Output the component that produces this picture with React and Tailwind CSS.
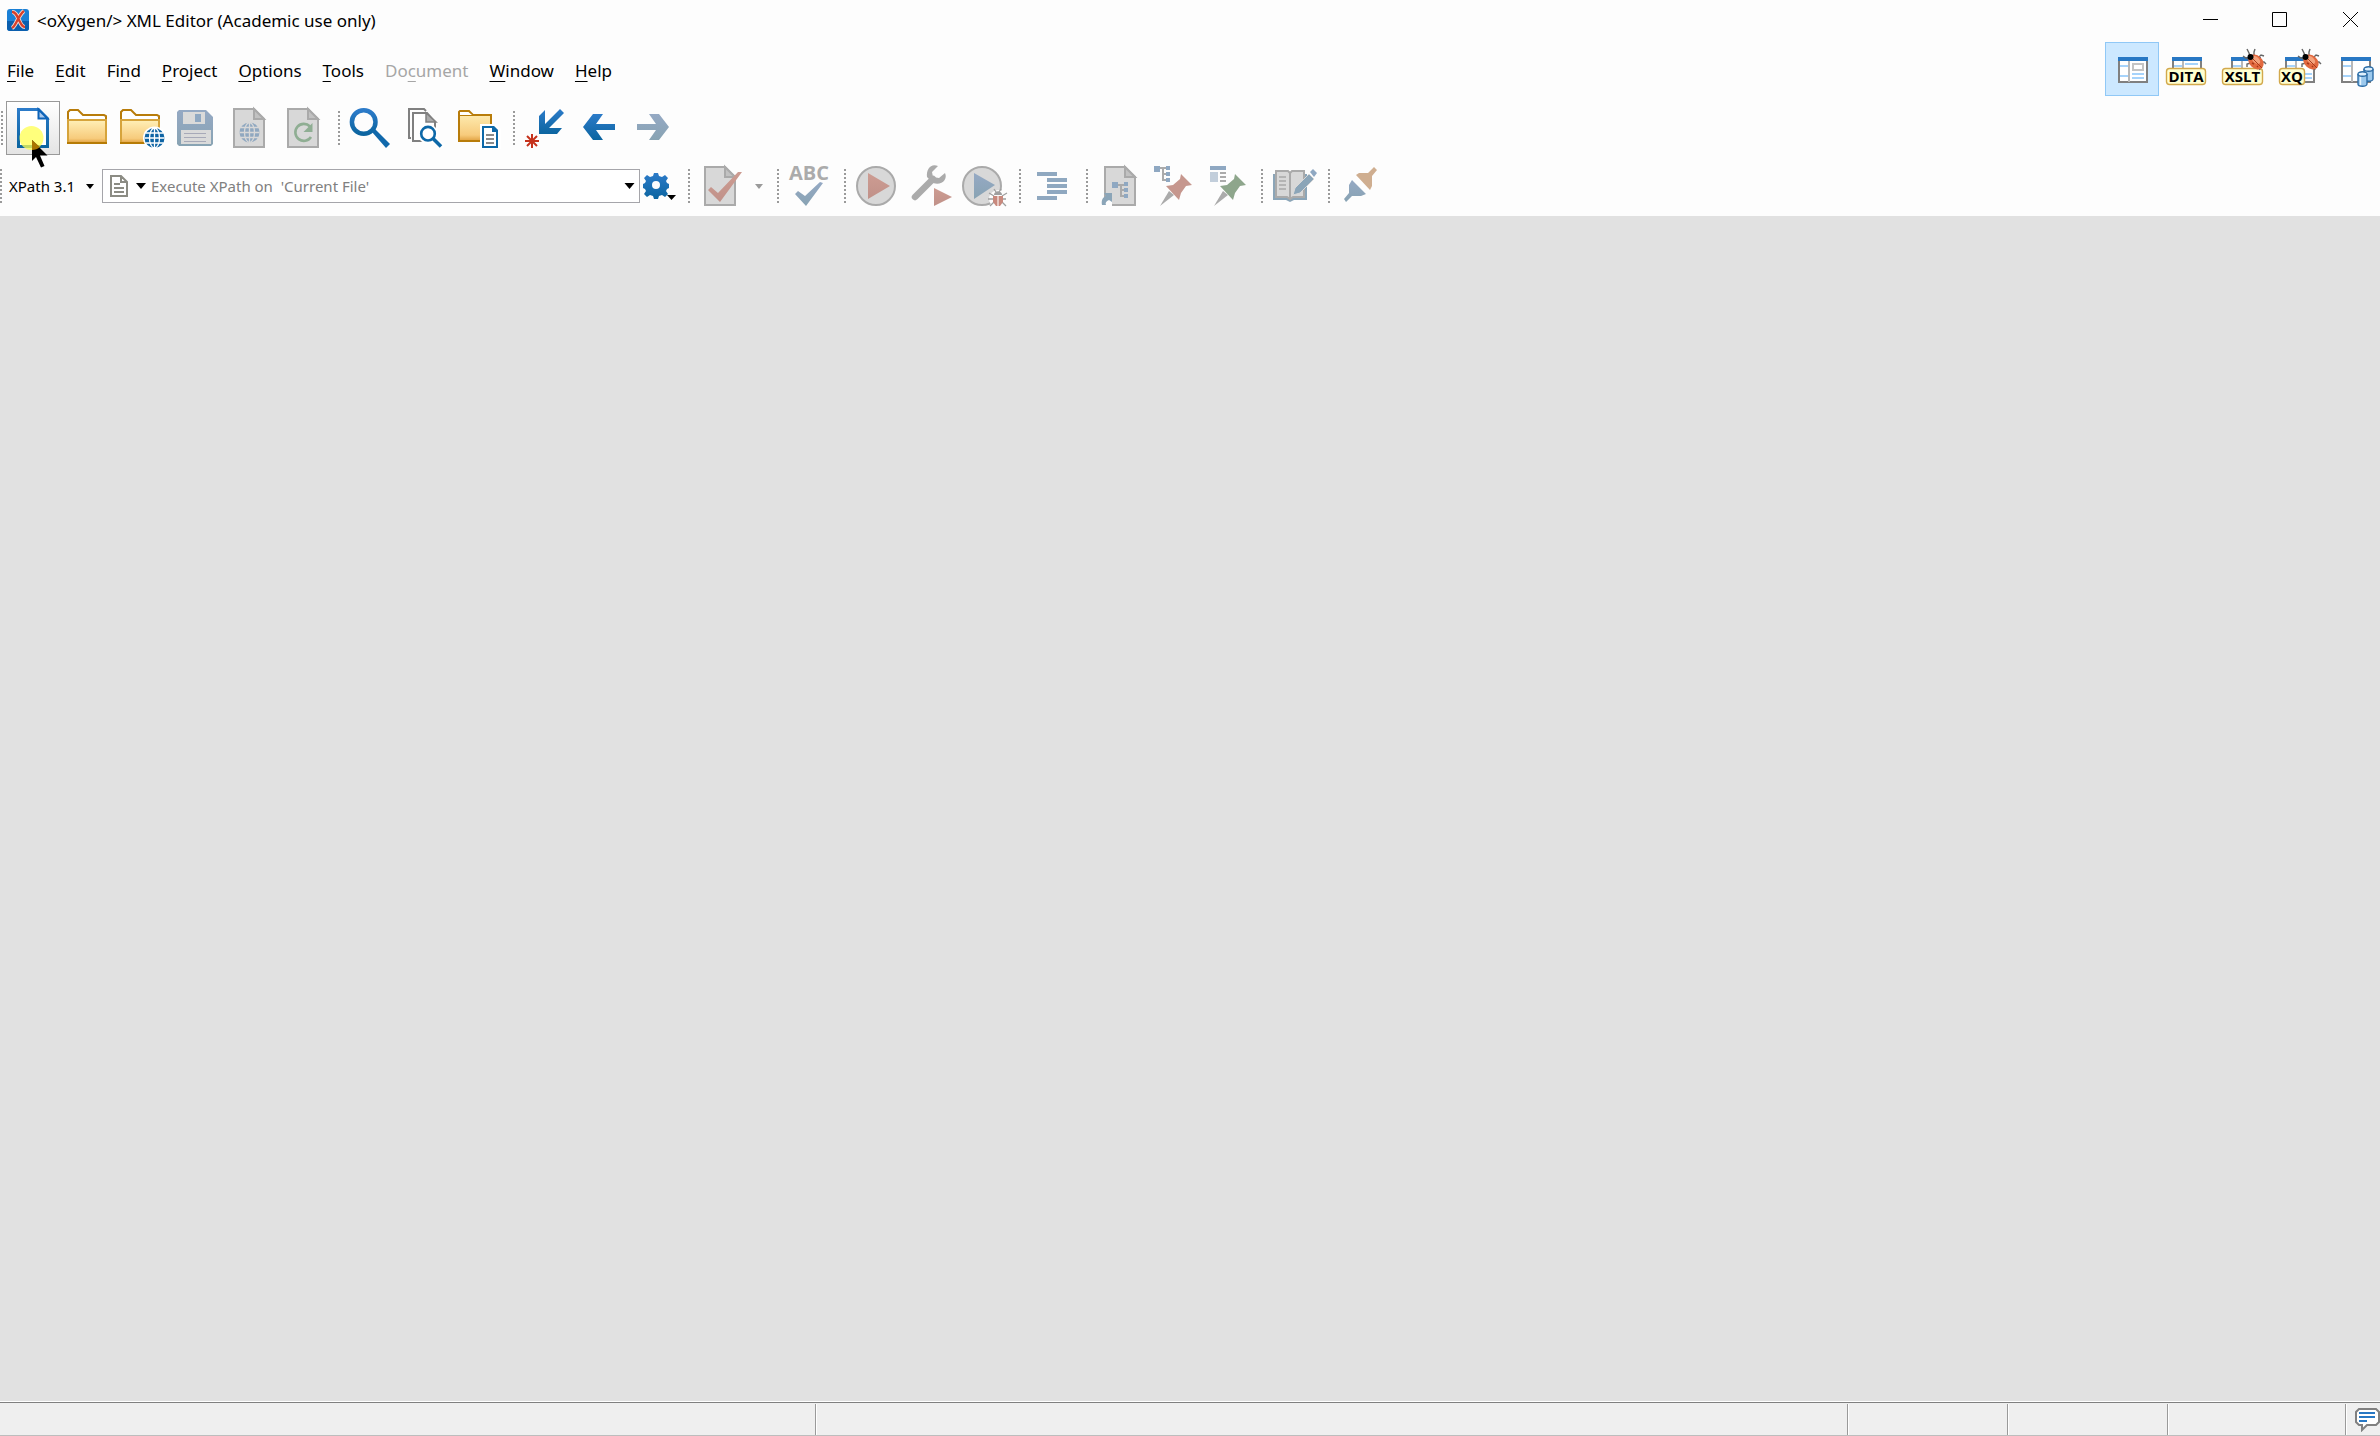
import clsx from "clsx";

const menus = [
  ["", "F", "ile"],
  ["", "E", "dit"],
  ["Fi", "n", "d"],
  ["", "P", "roject"],
  ["", "O", "ptions"],
  ["", "T", "ools"],
  ["Do", "c", "ument"],
  ["", "W", "indow"],
  ["", "H", "elp"],
];

function Icon({ children }) {
  return (
    <svg viewBox="0 0 48 48" className="size-12 shrink-0 overflow-visible" fill="none" aria-hidden="true">
      {children}
    </svg>
  );
}

function ToolButton({ label, active, disabled, children }) {
  return (
    <button
      aria-label={label}
      disabled={disabled}
      className={clsx(
        "flex size-[54px] shrink-0 items-center justify-center border",
        active ? "border-[#999999] bg-linear-to-b from-white to-[#e4e4e4]" : "border-transparent"
      )}
    >
      <Icon>{children}</Icon>
    </button>
  );
}

function Separator() {
  return (
    <div className="flex w-[13px] shrink-0 justify-end pr-[3px]">
      <Dots />
    </div>
  );
}

function Dots() {
  return <div className="h-[34px] w-0.5 bg-[repeating-linear-gradient(to_bottom,#9a9a9a_0_2px,transparent_2px_4px)]" />;
}

function Caret({ className }) {
  return (
    <svg viewBox="0 0 10 6" className={className} fill="currentColor" aria-hidden="true">
      <path d="M0 0h10L5 6z" />
    </svg>
  );
}

/* Shared gradients */
function Defs() {
  return (
    <svg className="absolute size-0" aria-hidden="true">
      <defs>
        <linearGradient id="blue" x1="0" y1="0" x2="0" y2="1">
          <stop offset="0" stopColor="#2c7bc9" />
          <stop offset="1" stopColor="#0c65a0" />
        </linearGradient>
        <linearGradient id="pale" x1="0" y1="0" x2="0" y2="1">
          <stop offset="0" stopColor="#95a9c4" />
          <stop offset="1" stopColor="#88a3b3" />
        </linearGradient>
        <linearGradient id="rose" x1="0" y1="0" x2="0" y2="1">
          <stop offset="0" stopColor="#cd9c92" />
          <stop offset="1" stopColor="#c09189" />
        </linearGradient>
        <linearGradient id="folder" x1="0" y1="0" x2="0" y2="1">
          <stop offset="0" stopColor="#fff0b8" />
          <stop offset="0.8" stopColor="#f7cb7c" />
          <stop offset="1" stopColor="#e0a040" />
        </linearGradient>
      </defs>
    </svg>
  );
}

function Page({ x = 8, stroke = "#aaaaaa", fill = "#d8d8d8", fold = "#c2c2c2" }) {
  return (
    <g transform={`translate(${x} 4)`} stroke={stroke} strokeWidth="2">
      <path d="M1 1h20l10 10v28H1z" fill={fill} />
      <path d="M21 1v10h10z" fill={fold} />
    </g>
  );
}

function Folder({ x = 4 }) {
  return (
    <g transform={`translate(${x} 0)`}>
      <path d="M1 16V8l2-2h8l5 5h21l2 1v4" stroke="#b87c0a" strokeWidth="2" fill="#fff" />
      <path d="M1 16h38v23H1z" fill="url(#folder)" stroke="#d6a43c" strokeWidth="2" />
      <path d="M0 39h40" stroke="#b67b05" strokeWidth="2" />
    </g>
  );
}

function Globe({ cx, cy, fill, line }) {
  return (
    <g transform={`translate(${cx} ${cy})`}>
      <circle r="10" fill={fill} />
      <path d="M-10 0h20M0-10v20M-9-5H9M-9 5H9" stroke={line} strokeWidth="1.3" />
      <ellipse rx="5" ry="10" stroke={line} strokeWidth="1.3" />
    </g>
  );
}

function Pin({ fill }) {
  return (
    <>
      <path d="M12 44l9-15 5 4z" fill="#ababab" />
      <path d="M33 12l11 11-6 1-5 7-2 7-13-14 7-1 7-6z" fill={fill} />
    </>
  );
}

/* Perspective window frame */
function Frame({ x = 10, plain }) {
  return (
    <g transform={`translate(${x} 8)`}>
      <path d="M1 3h28v22H1z" fill="#fff" stroke="#808080" strokeWidth="2" />
      <path d="M11 4v21" stroke="#b8b8b8" strokeWidth="2" />
      <path d="M2 9h8M2 19h8" stroke="#a6d3fb" strokeWidth="2" />
      {!plain && <path d="M14 17h13M14 21h13" stroke="#a6d3fb" strokeWidth="2" />}
      <path d="M0 0h30v4H0z" fill="#2878c4" />
    </g>
  );
}

function Tag({ x, width, children }) {
  return (
    <>
      <rect x={x} y="19.5" width={width} height="16" rx="3" fill="#ffffd0" stroke="#d2a94c" strokeWidth="1.4" />
      <text x={x + width / 2} y="33" textAnchor="middle" fill="#000" className="font-['Open_Sans',sans-serif] text-[15px] font-bold">
        {children}
      </text>
    </>
  );
}

function Beetle({ x }) {
  return (
    <g transform={`translate(${x} 11)`}>
      <path
        d="M-4-1l-4-1-3-2M-4-4l-1-3-2-4M0-4V-8l1-3M-3 3l-4 1v3M4-2l3-3 3 1M7 2h3l2 2M5 7l1 3"
        stroke="#666"
        strokeWidth="1.4"
      />
      <ellipse rx="8.5" ry="6.5" transform="translate(2 2) rotate(42)" fill="#e2693f" />
      <ellipse rx="5" ry="3" transform="translate(2 0) rotate(42)" fill="#f4a27c" />
      <path d="M-3-3L8 8" stroke="#a8391a" />
      <path d="M-2 3l2 1M3 6l1 1" stroke="#a8391a" strokeWidth="1.5" />
      <circle cx="-3.500" cy="-3" r="3" fill="#000" />
    </g>
  );
}

function Cylinder({ x, y }) {
  return (
    <g transform={`translate(${x} ${y})`} stroke="#2b6ca6" strokeWidth="1.4">
      <path d="M1 3v10c0 3 9 3 9 0V3" fill="#9cc9ed" />
      <path d="M3.500 5v9" stroke="#e6f4fd" />
      <ellipse cx="5.500" cy="3" rx="4.500" ry="2.200" fill="#dff0fc" />
    </g>
  );
}

function Perspective({ label, active, last, children }) {
  return (
    <button
      aria-label={label}
      aria-pressed={!!active}
      className={clsx(
        "flex h-[54px] items-center justify-center border",
        active ? "w-[54px] border-[#90c8f6] bg-[#cce8ff]" : "border-transparent",
        !active && (last ? "w-[53px]" : "w-14")
      )}
    >
      <svg viewBox="0 0 48 40" className="h-10 w-12 shrink-0 overflow-visible" fill="none" aria-hidden="true">
        {children}
      </svg>
    </button>
  );
}

function TitleBar() {
  return (
    <header className="flex h-10 items-center justify-between">
      <div className="flex items-center gap-2 pl-[7px]">
        <svg viewBox="0 0 22 22" className="size-[22px]" aria-hidden="true">
          <rect width="22" height="22" rx="3" fill="#1a80d6" />
          <path d="M0 12h22v7a3 3 0 0 1-3 3H3a3 3 0 0 1-3-3z" fill="#0b5fae" />
          <path d="M5 3c4 0 5 4 7 8s3 7 6 7M17 2c-3 2-5 6-7 10s-3 6-5 7" fill="none" stroke="#f6ded8" strokeWidth="4" />
          <path d="M5 3c4 0 5 4 7 8s3 7 6 7M17 2c-3 2-5 6-7 10s-3 6-5 7" fill="none" stroke="#d8402a" strokeWidth="2.4" />
        </svg>
        <h1 className="pt-0.5 font-['Noto_Sans','Open_Sans',sans-serif] text-[17px] leading-6">
          &lt;oXygen/&gt; XML Editor (Academic use only)
        </h1>
      </div>
      <div className="flex">
        {[
          ["Minimize", "M4 11.5h15"],
          ["Maximize", "M4.500 4.500h14v14h-14z"],
          ["Close", "M6 4l15 15M21 4L6 19"],
        ].map(([label, d]) => (
          <button key={label} aria-label={label} className="flex h-10 w-[69px] items-center justify-center pl-1.5">
            <svg viewBox="0 0 24 24" className="size-6" fill="none" stroke="#000" aria-hidden="true">
              <path d={d} />
            </svg>
          </button>
        ))}
      </div>
    </header>
  );
}

function MenuBar() {
  return (
    <div className="flex h-[59px] items-center justify-between">
      <nav className="flex gap-[21px] pt-0.5 pl-[7px] font-['Noto_Sans','Open_Sans',sans-serif] text-[17px] leading-6">
        {menus.map(([before, key, after]) => (
          <button key={before + key + after} disabled={key === "c"} className="disabled:text-[#a6a6a6]">
            {before}
            <span className="underline decoration-1 underline-offset-4">{key}</span>
            {after}
          </button>
        ))}
      </nav>
      <div className="flex pb-px">
        <Perspective label="Editor" active>
          <Frame plain />
          <path d="M25 15h10v6H25z" fill="#fff" stroke="#c4c4c4" strokeWidth="2" />
          <path d="M24 25h12M24 29h12" stroke="#a6d3fb" strokeWidth="2" />
        </Perspective>
        <Perspective label="DITA">
          <Frame x={9} plain />
          <path d="M22 15h13" stroke="#a6d3fb" strokeWidth="2" />
          <Tag x={3.5} width={39}>DITA</Tag>
        </Perspective>
        <Perspective label="XSLT Debugger">
          <Frame x={12} plain />
          <Tag x={3.5} width={40}>XSLT</Tag>
          <Beetle x={35} />
        </Perspective>
        <Perspective label="XQuery Debugger">
          <Frame x={10} />
          <Tag x={4.5} width={25}>XQ</Tag>
          <Beetle x={34} />
        </Perspective>
        <Perspective label="Database" last>
          <Frame x={11} plain />
          <Cylinder x={33} y={17} />
          <Cylinder x={27} y={22} />
        </Perspective>
      </div>
    </div>
  );
}

function MainToolbar() {
  return (
    <div className="flex h-[58px] items-center">
      <div className="w-1.5 shrink-0 pl-px">
        <Dots />
      </div>
      <div className="relative">
        <ToolButton label="New" active>
          <path d="M9.500 5.500h20l9 9v28h-29z" fill="#fff" stroke="url(#blue)" strokeWidth="3" />
          <path d="M29.500 5.500v9h9z" fill="#a9c9ee" stroke="#0d63b8" strokeWidth="2" />
          <circle cx="22.500" cy="34" r="12" fill="#ffff50" fillOpacity="0.75" />
        </ToolButton>
        {/* Mouse pointer */}
        <svg viewBox="0 0 16 28" className="pointer-events-none absolute top-[39px] left-[26px] z-10 h-7 w-4" aria-hidden="true">
          <path d="M0 0v21l4-4 5 10.500 3.500-1.500-4.500-10.500h7.500z" fill="#000" />
          <path d="M0 0v10c3 0 6-1 8-3z" fill="#a87500" />
        </svg>
      </div>
      <ToolButton label="Open">
        <Folder />
      </ToolButton>
      <ToolButton label="Open URL">
        <Folder x={3} />
        <circle cx="37.500" cy="34" r="11.500" fill="#fff" />
        <Globe cx={37.5} cy={34} fill="#0e64a4" line="#fff" />
      </ToolButton>
      <ToolButton label="Save" disabled>
        <path d="M8 6h27l7 7v27l-2 2H8l-2-2V8z" fill="url(#pale)" />
        <path d="M12 8h22v12H12zM10 26h30v14H10z" fill="#dadada" />
        <path d="M24 10h6v8h-6z" fill="#8fa8c2" />
        <path d="M13 29.500h22M13 33.500h22M13 37.500h22" stroke="#a7a9b8" />
      </ToolButton>
      <ToolButton label="Save to URL" disabled>
        <Page />
        <Globe cx={24.5} cy={28.5} fill="#90a8c0" line="#d8d8d8" />
      </ToolButton>
      <ToolButton label="Reload" disabled>
        <Page />
        <path d="M32 33a8.500 8.500 0 1 1-1-10.500" stroke="#8fae93" strokeWidth="2.600" />
        <path d="M33.500 19v9h-9z" fill="#8fae93" />
      </ToolButton>
      <Separator />
      <ToolButton label="Find">
        <circle cx="17.700" cy="18" r="11.800" stroke="url(#blue)" strokeWidth="4.500" />
        <path d="M26 28l3-3 15 15-4 4z" fill="#1068ab" />
      </ToolButton>
      <ToolButton label="Find in Files">
        <path d="M11 34H9V5h15l2 2" stroke="#808080" strokeWidth="2" />
        <path d="M13 9h14l8 9v19H13z" fill="#fff" stroke="#808080" strokeWidth="2" />
        <path d="M26 9v9h10z" fill="#ababab" stroke="#808080" strokeWidth="1.500" />
        <circle cx="28" cy="30" r="10" fill="#fff" />
        <path d="M34 38l8 7 3-4-8-7z" fill="#fff" />
        <circle cx="28" cy="29.700" r="6.800" fill="#fff" stroke="#0d68a8" strokeWidth="2.600" />
        <path d="M33 34.500l8 8" stroke="#0d68a8" strokeWidth="3.600" />
      </ToolButton>
      <ToolButton label="Find Resource">
        <path d="M5 37V8l1-1h9l4 4h18v26z" fill="url(#folder)" stroke="#b87c0a" strokeWidth="2" />
        <path d="M6 8h8l4 3H6z" fill="#fff" />
        <path d="M5 11.500h31" stroke="#b87c0a" />
        <path d="M26 20h16l5 5v20H26z" fill="#fff" />
        <path d="M29 23h10l4 4v16H29z" fill="#fff" stroke="#0d68a8" strokeWidth="2" />
        <path d="M38 22h2l4 4v2h-6z" fill="#0d68a8" />
        <path d="M32 31h8M32 35h8M32 39h8" stroke="#8a8a8a" strokeWidth="2" />
      </ToolButton>
      <Separator />
      <ToolButton label="Last Modification">
        <path d="M18 12l6-6v14L39 5l4 4-15 15h13l-5 6H18z" fill="url(#blue)" />
        <path d="M11 30v14M4 37h14M6 32l10 10M16 32L6 42" stroke="#c5321c" strokeWidth="2" />
      </ToolButton>
      <ToolButton label="Back">
        <path d="M8 23l10-13h10l-7 10h19v6H21l7 10H18z" fill="url(#blue)" />
      </ToolButton>
      <ToolButton label="Forward" disabled>
        <path d="M40 23L30 10H20l7 10H8v6h19l-7 10h10z" fill="url(#pale)" />
      </ToolButton>
    </div>
  );
}

function XPathToolbar() {
  return (
    <div className="flex h-[59px] items-center pb-px">
      <div className="w-[9px] shrink-0">
        <Dots />
      </div>
      <button className="flex w-[93px] shrink-0 items-center justify-between pr-2 font-['Noto_Sans','Open_Sans',sans-serif] text-[15px] leading-6">
        <span className="whitespace-nowrap">XPath 3.1</span>
        <Caret className="h-[5px] w-2" />
      </button>
      <div className="flex h-[34px] w-[538px] shrink-0 items-center border border-[#a5a5aa] bg-white">
        <button aria-label="XPath scope" className="flex shrink-0 items-center gap-2 pr-[5px] pl-[7px]">
          <svg viewBox="0 0 18 22" className="h-[22px] w-[18px]" fill="none" stroke="#8c8c84" strokeWidth="2" aria-hidden="true">
            <path d="M1 1h10l6 6v14H1zM11 1v6h6M4 9h6M4 13h10M4 17h10" />
          </svg>
          <Caret className="h-[6px] w-2.5" />
        </button>
        <input
          aria-label="XPath expression"
          placeholder="Execute XPath on  'Current File'"
          className="min-w-0 flex-1 font-['Noto_Sans','Open_Sans',sans-serif] text-[15px] leading-6 outline-none placeholder:text-[#808080]"
        />
        <button aria-label="XPath history" className="flex h-full w-5 shrink-0 items-center justify-center">
          <Caret className="h-[6px] w-[11px]" />
        </button>
      </div>
      <button aria-label="XPath settings" className="flex h-[54px] w-10 shrink-0 items-center justify-center">
        <svg viewBox="0 0 40 48" className="h-12 w-10" aria-hidden="true">
          <g transform="translate(16 23)" fill="url(#blue)">
            <path
              fillRule="evenodd"
              d="M-2-12h4l1 3 3 1 3-2 3 3-2 3 1 2 2 1v4l-2 1-1 2 2 3-3 3-3-2-3 1-1 3h-4l-1-3-3-1-3 2-3-3 2-3-1-2-2-1v-4l2-1 1-2-2-3 3-3 3 2 3-1zM4 0a4 4 0 1 0-8 0a4 4 0 1 0 8 0z"
            />
          </g>
          <path d="M27 33h9l-4.500 5z" />
        </svg>
      </button>
      <Separator />
      <ToolButton label="Validate" disabled>
        <Page />
        <path d="M12 28l3-3 7 6L42 10h4L24 40z" fill="url(#rose)" />
      </ToolButton>
      <button
        aria-label="Validation options"
        disabled
        className="flex h-[54px] w-[22px] shrink-0 items-center justify-center pl-0.5 text-[#9a9a9a]"
      >
        <Caret className="h-[5px] w-2" />
      </button>
      <Separator />
      <ToolButton label="Check Spelling" disabled>
        <text x="24" y="18" textAnchor="middle" fill="#ababab" className="font-['Open_Sans',sans-serif] text-[20px] font-bold">
          ABC
        </text>
        <path d="M10 32l3-3 7 5L35 20l3 1-17 23z" fill="url(#pale)" />
      </ToolButton>
      <Separator />
      <ToolButton label="Apply Transformation" disabled>
        <circle cx="24" cy="24" r="19" fill="#d8d8d8" stroke="#aaaaaa" strokeWidth="2" />
        <path d="M16 11l22 13-22 13z" fill="url(#rose)" />
      </ToolButton>
      <ToolButton label="Configure Transformation" disabled>
        <path d="M9 35l18-18" stroke="#ababab" strokeWidth="6.500" strokeLinecap="round" />
        <path d="M32 4l-6 6 1 5 6 1 6-5c3 6-3 13-12 10l-6-6c-1-8 4-14 11-11z" fill="#ababab" />
        <path d="M28 26l18 9-18 9z" fill="url(#rose)" />
      </ToolButton>
      <ToolButton label="Debug Scenario" disabled>
        <circle cx="22" cy="24" r="19" fill="#d8d8d8" stroke="#aaaaaa" strokeWidth="2" />
        <path d="M14 11l21 12-21 14z" fill="url(#pale)" />
        <circle cx="38" cy="37" r="9" fill="#fdfdfd" />
        <path d="M29 31l5 3M47 31l-5 3M28 37h18M30 44l4-4M46 44l-4-4M34 27l2 3M41 27l-2 3" stroke="#9f9f9f" strokeWidth="1.300" />
        <path d="M33 34h10v6l-3 4h-4l-3-4z" fill="#c8897d" />
        <path d="M34 33c0-5 8-5 8 0z" fill="#9f9f9f" />
        <path d="M38 34v10" stroke="#f0ddd8" strokeWidth="1.500" />
      </ToolButton>
      <Separator />
      <ToolButton label="Format and Indent" disabled>
        <path d="M10 10h20v4H10zM20 16h20v4H20zM20 22h20v4H20zM20 28h20v4H20zM10 34h20v4H10z" fill="#8fa8c0" />
      </ToolButton>
      <Separator />
      <ToolButton label="Associate Schema" disabled>
        <Page x={10} />
        <path d="M24 23h6M27 23v11h4M27 28h4" stroke="#aaaaaa" strokeWidth="2" />
        <path d="M18 20h6v6h-6zM30 20h4v4h-4zM30 26h4v4h-4zM30 32h4v4h-4z" fill="#8fa8c2" />
        <path d="M8 36h10v9H8z" fill="#fdfdfd" />
        <path d="M8 43c-1-5 1-8 4-9l-2-3h8v9l-3-2c-3 1-4 3-3 5z" fill="#8ba5b8" />
      </ToolButton>
      <ToolButton label="Pin Schema" disabled>
        <path d="M12 6h6M15 6v12h4M15 12h4" stroke="#ababab" strokeWidth="2" />
        <path d="M6 4h6v6H6zM18 4h4v4h-4zM18 10h4v4h-4zM18 16h4v4h-4z" fill="#8fa8c2" />
        <Pin fill="#c6978e" />
      </ToolButton>
      <ToolButton label="Pin Stylesheet" disabled>
        <path d="M8 4h16v4H8z" fill="#8fa8c2" />
        <path d="M8 10h8v10H8z" fill="#c2cedb" />
        <path d="M18 11h6M18 15h6M18 19h6" stroke="#ababab" strokeWidth="2" />
        <Pin fill="#8ea68c" />
      </ToolButton>
      <Separator />
      <ToolButton label="Edit Annotations" disabled>
        <path d="M4 12h34v26H25l-4 2-4-2H4z" fill="#8ba5b8" />
        <path d="M7 9h12l2 2 2-2h12v26H24l-3 2-3-2H7z" fill="#d8d8d8" stroke="#aaaaaa" strokeWidth="2" />
        <path d="M21 11v25" stroke="#aaaaaa" strokeWidth="2" />
        <path d="M10 15h7M10 19h7M10 23h7M10 27h7" stroke="#b4b4b4" strokeWidth="2" />
        <path d="M24 33l2-7 14-14 5 5-14 14z" fill="#8ba5b8" stroke="#d8d8d8" />
        <path d="M41 10l3-3 4 4-3 4z" fill="#8fa8c2" />
      </ToolButton>
      <Separator />
      <ToolButton label="Connect" disabled>
        <path d="M20 13l3-2h9l6-6 3 3-5 6v10l-2 4z" fill="#cfae90" />
        <path d="M16 18l14 14-5 2h-9l-6 6-2-3 5-6v-8z" fill="url(#pale)" />
      </ToolButton>
    </div>
  );
}

function StatusBar() {
  const cell = "border-r border-r-[#9a9a9a] shadow-[1px_0_0_#fff]";
  return (
    <footer className="flex h-[35px] shrink-0 flex-col border-t border-b border-t-white border-b-[#bdbdbd] bg-[#efefef]">
      <div className="h-px w-full bg-[#808080]" />
      <div className="flex flex-1 pt-px">
        <div className={clsx(cell, "w-[816px]")} />
        <div className={clsx(cell, "flex-1")} />
        <div className={clsx(cell, "w-40")} />
        <div className={clsx(cell, "w-40")} />
        <div className={clsx(cell, "w-[178px]")} />
        <button aria-label="Messages" className="flex w-[34px] justify-end pt-1">
          <svg viewBox="0 0 25 24" className="h-6 w-[25px]" fill="none" aria-hidden="true">
            <path d="M4 1h17l3 3v10l-3 3H12l-5 5v-5H4l-3-3V4z" fill="#fff" stroke="#808080" strokeWidth="2" />
            <path d="M4 5h16M4 9h16M4 13h8" stroke="#2878c4" strokeWidth="2" />
          </svg>
        </button>
      </div>
    </footer>
  );
}

export default function App() {
  return (
    <div className="flex min-h-screen flex-col bg-[#fdfdfd] font-['Open_Sans','Noto_Sans',sans-serif] text-black">
      <Defs />
      <TitleBar />
      <MenuBar />
      <MainToolbar />
      <XPathToolbar />
      <main className="flex-1 bg-[#e1e1e1]" />
      <StatusBar />
    </div>
  );
}
